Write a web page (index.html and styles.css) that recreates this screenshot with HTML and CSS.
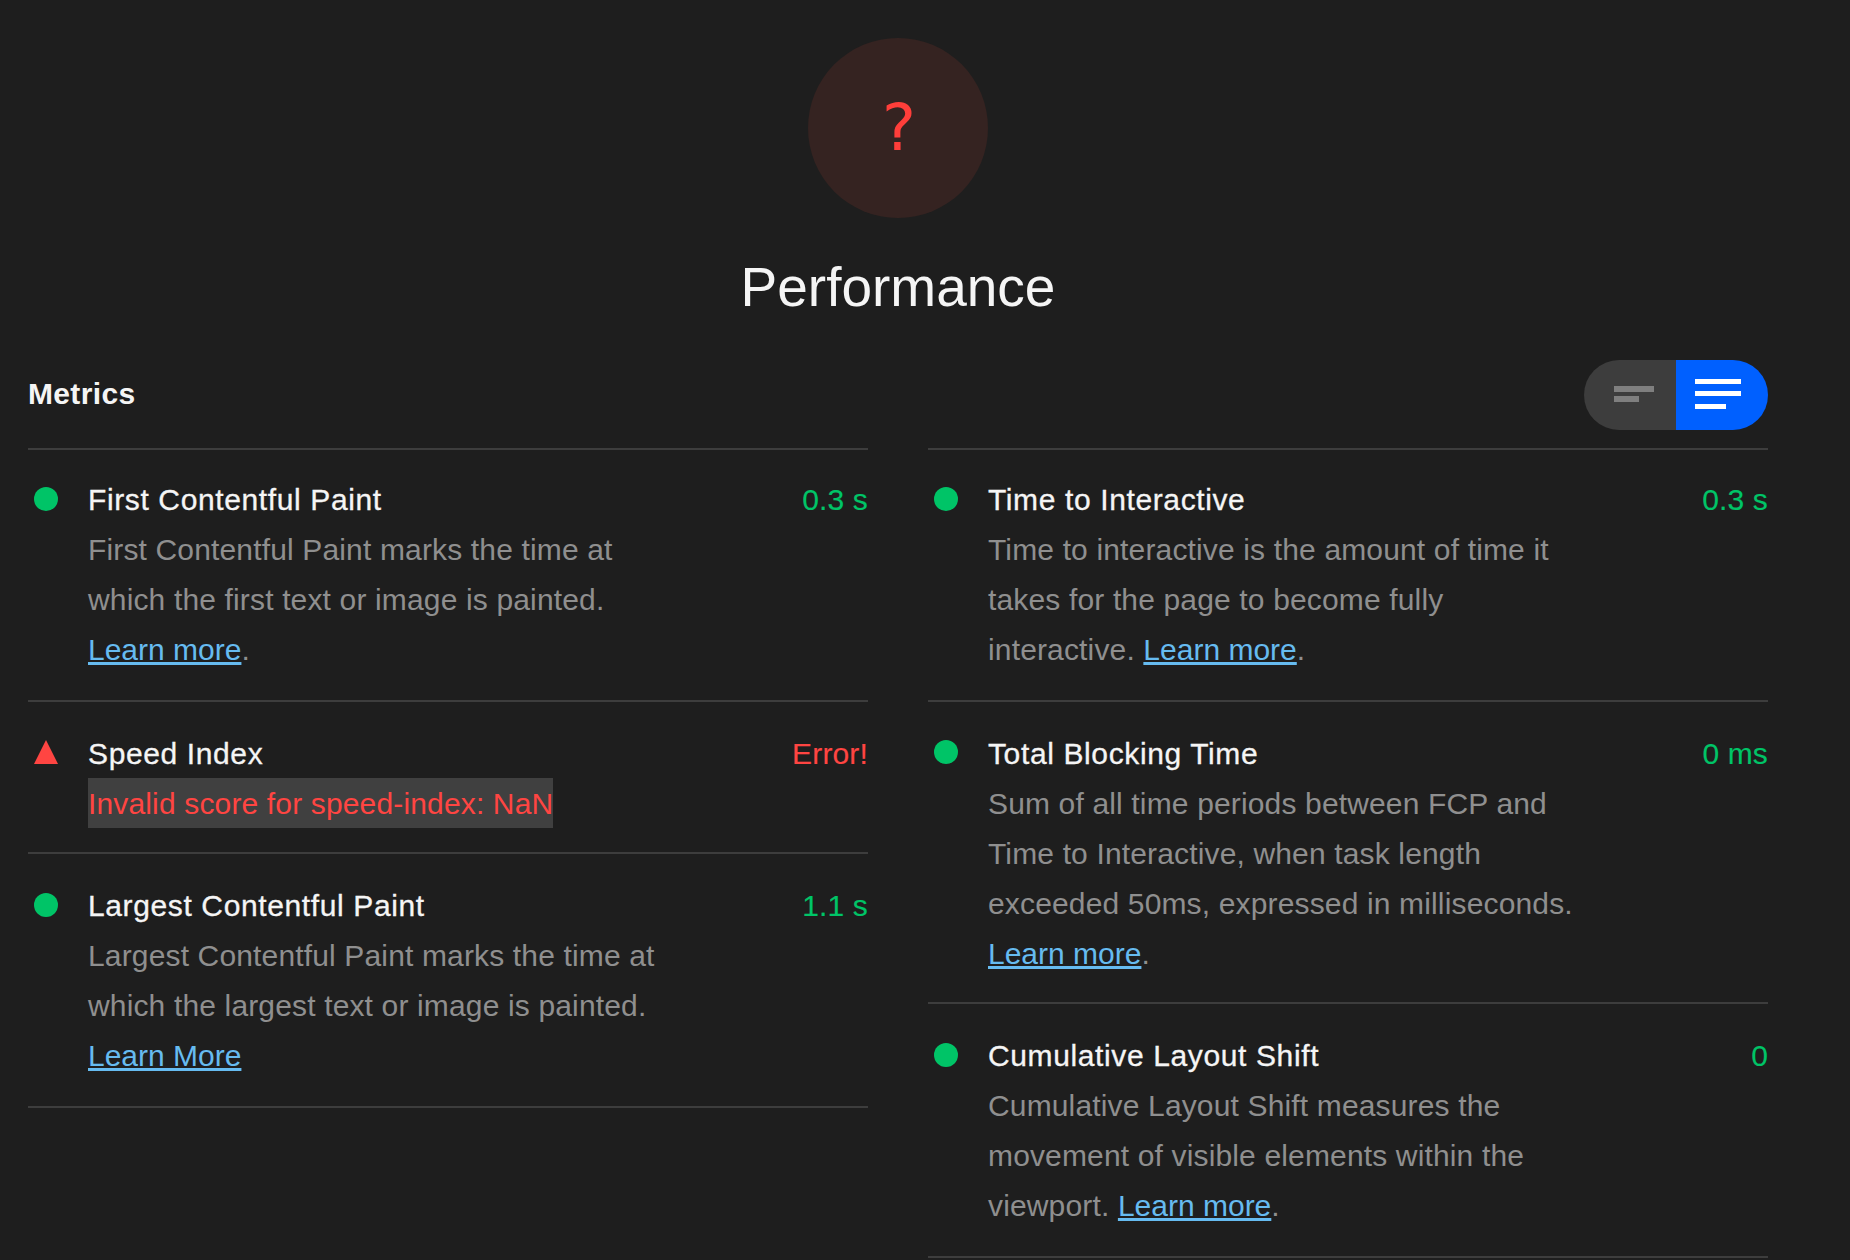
FILE: index.html
```html
<!DOCTYPE html>
<html lang="en">
<head>
    <meta charset="UTF-8">
    <meta name="viewport" content="width=device-width, initial-scale=1.0">
    <title>Performance</title>
    <link rel="stylesheet" href="styles.css">
</head>
<body>
    <div class="container">
        <div class="gauge">
            <div class="gauge-circle">?</div>
            <h1 class="gauge-label">Performance</h1>
        </div>
        <div class="metrics-head">
            <h2>Metrics</h2>
            <div class="toggle">
                <button class="toggle-btn compact">
                    <svg width="40" height="16" viewBox="0 0 40 16"><rect y="0" width="40" height="6" fill="#7f7f7f"/><rect y="10" width="25" height="6" fill="#7f7f7f"/></svg>
                </button>
                <button class="toggle-btn active">
                    <svg width="46" height="30" viewBox="0 0 46 30"><rect y="0" width="46" height="5" fill="#fff"/><rect y="12" width="46" height="5" fill="#fff"/><rect y="25" width="31" height="5" fill="#fff"/></svg>
                </button>
            </div>
        </div>
        <div class="columns">
            <div class="column">
                <div class="metric">
                    <span class="dot"></span>
                    <div class="metric-body">
                        <div class="metric-top"><span class="metric-name">First Contentful Paint</span><span class="metric-value pass">0.3 s</span></div>
                        <p class="metric-desc">First Contentful Paint marks the time at which the first text or image is painted. <a href="#">Learn more</a>.</p>
                    </div>
                </div>
                <div class="metric">
                    <span class="triangle"></span>
                    <div class="metric-body">
                        <div class="metric-top"><span class="metric-name">Speed Index</span><span class="metric-value fail">Error!</span></div>
                        <p class="metric-desc"><span class="metric-error">Invalid score for speed-index: NaN</span></p>
                    </div>
                </div>
                <div class="metric">
                    <span class="dot"></span>
                    <div class="metric-body">
                        <div class="metric-top"><span class="metric-name">Largest Contentful Paint</span><span class="metric-value pass">1.1 s</span></div>
                        <p class="metric-desc">Largest Contentful Paint marks the time at which the largest text or image is painted. <a href="#">Learn More</a></p>
                    </div>
                </div>
            </div>
            <div class="column">
                <div class="metric">
                    <span class="dot"></span>
                    <div class="metric-body">
                        <div class="metric-top"><span class="metric-name">Time to Interactive</span><span class="metric-value pass">0.3 s</span></div>
                        <p class="metric-desc">Time to interactive is the amount of time it takes for the page to become fully interactive. <a href="#">Learn more</a>.</p>
                    </div>
                </div>
                <div class="metric">
                    <span class="dot"></span>
                    <div class="metric-body">
                        <div class="metric-top"><span class="metric-name">Total Blocking Time</span><span class="metric-value pass">0 ms</span></div>
                        <p class="metric-desc">Sum of all time periods between FCP and Time to Interactive, when task length exceeded 50ms, expressed in milliseconds. <a href="#">Learn more</a>.</p>
                    </div>
                </div>
                <div class="metric">
                    <span class="dot"></span>
                    <div class="metric-body">
                        <div class="metric-top"><span class="metric-name">Cumulative Layout Shift</span><span class="metric-value pass">0</span></div>
                        <p class="metric-desc">Cumulative Layout Shift measures the movement of visible elements within the viewport. <a href="#">Learn more</a>.</p>
                    </div>
                </div>
            </div>
        </div>
    </div>
</body>
</html>
```

FILE: styles.css
```css
* {
    box-sizing: border-box;
}
body {
    margin: 0;
    background: #1e1e1e;
    color: #f5f5f5;
    font-family: "Liberation Sans", Arial, sans-serif;
    font-size: 30px;
    line-height: 50px;
    letter-spacing: 0.15px;
}
.container {
    width: 1768px;
    padding: 38px 0 0 28px;
}
.gauge {
    display: flex;
    flex-direction: column;
    align-items: center;
}
.gauge-circle {
    width: 180px;
    height: 180px;
    padding-left: 2px;
    border-radius: 50%;
    background: #352321;
    color: #ff3e3a;
    font-family: "DejaVu Sans", sans-serif;
    font-size: 64px;
    line-height: 180px;
    text-align: center;
}
.gauge-label {
    margin: 36px 0 0;
    font-size: 55px;
    font-weight: normal;
    line-height: 66px;
    letter-spacing: 0;
}
.metrics-head {
    display: flex;
    justify-content: space-between;
    align-items: center;
    margin-top: 40px;
    margin-bottom: 18px;
}
.metrics-head h2 {
    margin: 0 0 2px;
    font-size: 30px;
    line-height: 68px;
    letter-spacing: 0.35px;
}
.toggle {
    display: flex;
    height: 70px;
    border-radius: 35px;
    overflow: hidden;
}
.toggle-btn {
    display: flex;
    align-items: center;
    justify-content: center;
    width: 92px;
    padding: 0 8px 2px 0;
    border: none;
    background: #3d3d3d;
}
.toggle-btn.compact {
    padding: 0 0 2px 8px;
}
.toggle-btn.active {
    background: #0060ff;
}
.columns {
    display: grid;
    grid-template-columns: 840px 840px;
    gap: 60px;
}
.metric {
    display: flex;
    padding: 25px 0;
    border-top: 2px solid #3d3d3d;
}
.metric:nth-child(2) {
    padding: 27px 0 23px;
}
.metric:nth-child(3) {
    padding: 27px 0 25px;
    border-bottom: 2px solid #3d3d3d;
}
.dot {
    flex: none;
    width: 24px;
    height: 24px;
    margin: 12px 30px 0 6px;
    border-radius: 50%;
    background: #00c467;
}
.metric:nth-child(2) .dot,
.triangle {
    margin-top: 11px;
}
.triangle {
    flex: none;
    width: 0;
    height: 0;
    margin-right: 30px;
    margin-left: 6px;
    border-left: 12px solid transparent;
    border-right: 12px solid transparent;
    border-bottom: 24px solid #ff4542;
}
.metric-body {
    flex: 1;
}
.metric-top {
    display: flex;
    justify-content: space-between;
}
.metric-name {
    letter-spacing: 0.62px;
    -webkit-text-stroke: 0.3px currentColor;
}
.metric-value {
    -webkit-text-stroke: 0.15px currentColor;
}
.metric-value.pass {
    color: #00c467;
}
.metric-value.fail {
    color: #ff4542;
}
.metric-desc {
    margin: 0;
    max-width: 590px;
    color: #8f8f8f;
}
.metric-desc a {
    color: #66bbf0;
    letter-spacing: 0;
}
.metric-error {
    display: inline-block;
    margin-top: -1px;
    padding-top: 2px;
    background: #404040;
    color: #ff4542;
    line-height: 48px;
}
```
